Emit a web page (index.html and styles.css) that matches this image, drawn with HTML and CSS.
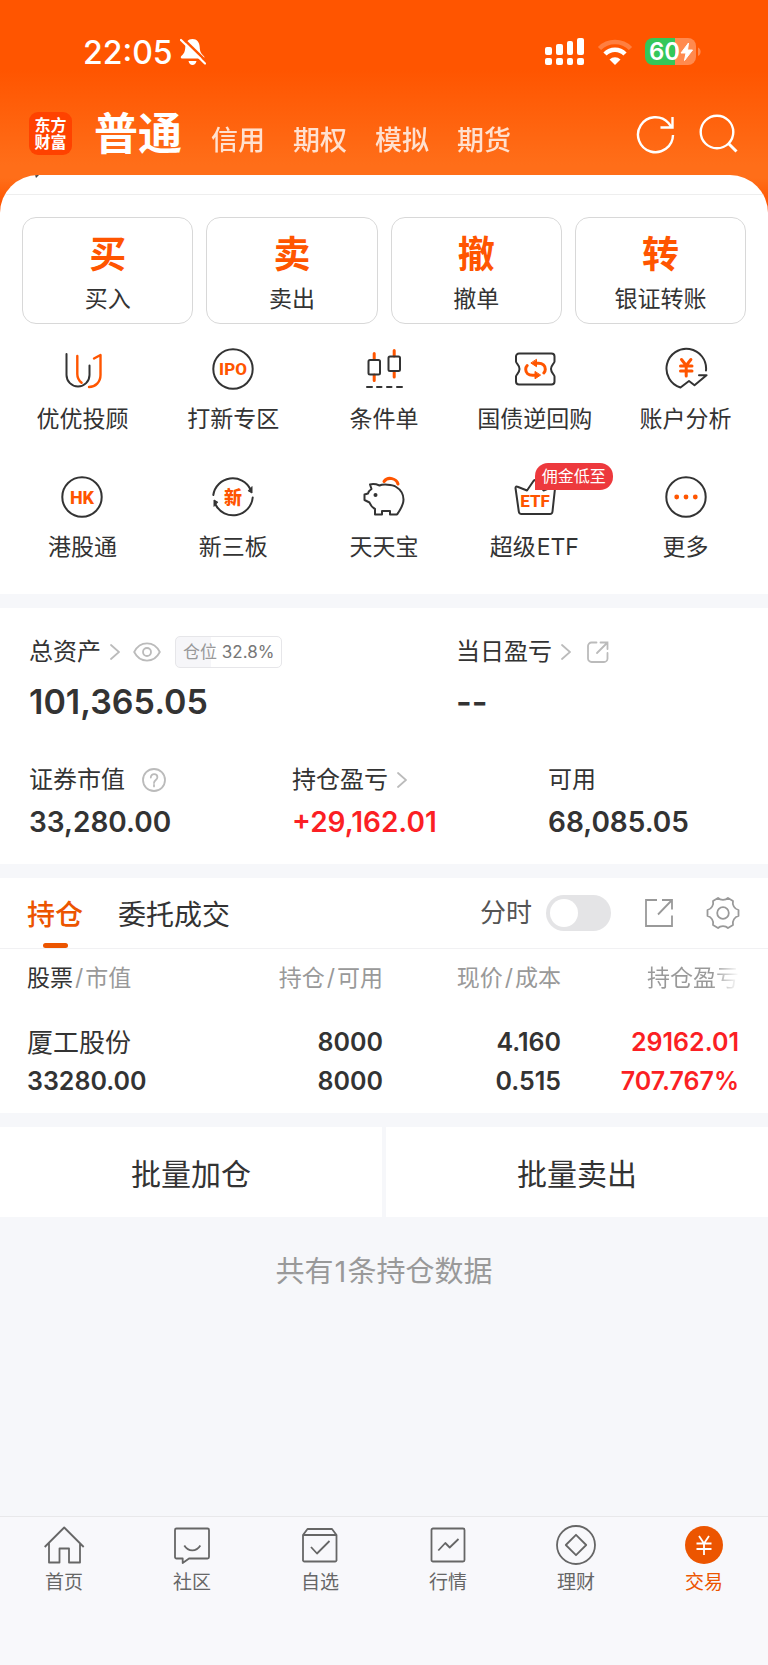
FILE: index.html
```html
<!DOCTYPE html>
<html lang="zh-CN">
<head>
<meta charset="utf-8">
<meta name="viewport" content="width=device-width, initial-scale=1">
<title>交易</title>
<link rel="stylesheet" href="styles.css">
</head>
<body>
<div class="app">
  <header class="top">
    <div class="status">
      <span class="time">22:05</span>
      <svg class="bell" width="26" height="28" viewBox="0 0 26 28"><path d="M12.500 1c-4.500 0-7 3.500-7.200 8-.2 5-1.600 7-4 9-.9 1-.6 2.500.7 2.500h21c1.500 0 1.800-1.500.8-2.500-2.500-2.300-3.900-4-4.100-9C19.500 4.500 17 1 12.500 1zM8.500 23c.6 2.500 2 4 4 4s3.400-1.500 4-4z" fill="#fff"/><path d="M3 .5 27 24" stroke="#ff5500" stroke-width="2.500"/><path d="M1 2 25 25.500" stroke="#fff" stroke-width="2.200" stroke-linecap="round"/></svg>
      <span class="spacer"></span>
      <svg width="40" height="28" viewBox="0 0 40 28" fill="#fff"><rect x="0" y="9" width="7" height="8" rx="2"/><rect x="11" y="6" width="7" height="11" rx="2"/><rect x="22" y="3" width="6" height="14" rx="2"/><rect x="32" y="0" width="7" height="17" rx="2"/><rect x="0" y="20" width="7" height="7" rx="2"/><rect x="11" y="20" width="7" height="7" rx="2"/><rect x="22" y="20" width="6" height="7" rx="2"/><rect x="32" y="20" width="7" height="7" rx="2"/></svg>
      <svg class="wifi" width="36" height="28" viewBox="0 0 36 28" fill="none" stroke="#fff"><path d="M2.500 10.500a22 22 0 0 1 31 0" stroke-width="4.500" opacity=".25"/><path d="M8 16a14 14 0 0 1 20 0" stroke-width="4.500"/><path d="M12.500 21.500a8 8 0 0 1 11 0L18 27z" fill="#fff" stroke="none"/></svg>
      <svg class="battery" width="56" height="28" viewBox="0 0 56 28"><path d="M8 0h22v27H8a8 8 0 0 1-8-8V8a8 8 0 0 1 8-8z" fill="#34c759"/><path d="M30 0h13a8 8 0 0 1 8 8v11a8 8 0 0 1-8 8H30z" fill="#ff8a4f"/><path d="M53 9.500c3.500 1.500 3.500 7 0 8.500z" fill="#ff8a4f"/><text x="4" y="22" class="battery-text">60</text><path d="M43.500 5 36 15h5l-1.500 7.500L47.500 12h-5z" fill="#fff" stroke="#fff" stroke-linejoin="round"/></svg>
    </div>
    <nav class="accounts">
      <div class="logo"><span>东方</span><span>财富</span></div>
      <a class="account current" href="#">普通</a>
      <div class="account-list"><a class="account" href="#">信用</a><a class="account" href="#">期权</a><a class="account" href="#">模拟</a><a class="account" href="#">期货</a></div>
      <span class="spacer"></span>
      <button class="icon-btn" aria-label="刷新"><svg width="40" height="40" viewBox="0 0 40 40" fill="none" stroke="#fff" stroke-width="2.400"><path d="M37 21A17.500 17.500 0 1 1 32.500 9l3 4M24.500 13.500h12V3"/></svg></button>
      <button class="icon-btn search" aria-label="搜索"><svg width="40" height="40" viewBox="0 0 40 40" fill="none" stroke="#fff" stroke-width="2.400"><circle cx="18" cy="18" r="16.300"/><path d="M29.500 29.500l8 8" stroke-width="3"/></svg></button>
    </nav>
  </header>

  <main>
    <section class="sheet">
      <div class="scroll-edge"><svg width="4" height="3" viewBox="0 0 4 3"><path d="M0 0h4L1 3z" fill="#444"/></svg></div>
      <div class="trades">
        <button class="trade"><b>买</b><span>买入</span></button>
        <button class="trade"><b>卖</b><span>卖出</span></button>
        <button class="trade"><b>撤</b><span>撤单</span></button>
        <button class="trade"><b>转</b><span>银证转账</span></button>
      </div>
      <div class="tools">
        <a class="tool" href="#"><svg class="ico" viewBox="0 0 44 44"><path d="M6.500 7v21a11.500 11.500 0 0 0 23 0v-9.500"/><path class="hot" d="M17.300 9v18c0 4 2 7 4.300 8.800M34 11.500 40.500 8v20c0 7-5 12-11.500 12"/></svg>优优投顾</a>
        <a class="tool" href="#"><svg class="ico" viewBox="0 0 44 44"><circle cx="22" cy="22" r="19.700"/><text x="22" y="28">IPO</text></svg>打新专区</a>
        <a class="tool" href="#"><svg class="ico" viewBox="0 0 44 44"><path class="hot thick" d="M12.200 6.500v6M12.200 28v5.500M32.200 3.500V9M32.200 25v5"/><rect x="6.500" y="13" width="11.500" height="14.500" rx="1.500"/><rect x="26.500" y="9.500" width="11.500" height="14.500" rx="1.500"/><path d="M5 40h5M15 40h4.500M25 40h4.500M35 40h5"/></svg>条件单</a>
        <a class="tool" href="#"><svg class="ico" viewBox="0 0 44 44"><path d="M6 6.500h32.500a3 3 0 0 1 3 3v5c0 2-3.500 3.500-3.500 7.500s3.500 5.500 3.500 7.500v5a3 3 0 0 1-3 3H6a3 3 0 0 1-3-3v-5c0-2 3.500-3.500 3.500-7.500S3 16.500 3 14.500v-5a3 3 0 0 1 3-3z"/><path class="hot thick" d="M23.500 16.200h2c4.200 0 6.800 2.500 6.800 6 0 1.500-.6 2.800-1.500 3.800M21.500 28.300h-2c-4.200 0-6.800-2.500-6.800-6 0-1.500.6-2.800 1.500-3.800"/><path d="M23.500 12.700v7l-5.300-3.500zM22 24.800v7l5.300-3.500z" fill="#ff5500" stroke="#ff5500" stroke-width="1"/></svg>国债逆回购</a>
        <a class="tool" href="#"><svg class="ico" viewBox="0 0 44 44"><path d="M42 23.500A19.800 19.800 0 1 0 16.500 40.500L25 34l5.500 4.300L42.500 28.200H35"/><path class="hot thick" d="M17.500 12.500l4.700 6 4.700-6M22.200 18.500V29M16.500 19h11.500M16.500 24h11.500"/></svg>账户分析</a>
        <a class="tool" href="#"><svg class="ico" viewBox="0 0 44 44"><circle cx="22" cy="22" r="19.700"/><text x="22" y="28.500" class="large">HK</text></svg>港股通</a>
        <a class="tool" href="#"><svg class="ico" viewBox="0 0 44 44"><path d="M2.300 20A19.700 19.700 0 0 1 39.500 14.500M41.700 22.500A19.700 19.700 0 0 1 4.500 29.500"/><path d="M41 12v6L37.500 16zM3 31v-6l3.500 2z" fill="#333" stroke-width="1"/><text x="22" y="28.500" class="large">新</text></svg>新三板</a>
        <a class="tool" href="#"><svg class="ico" viewBox="0 0 44 44"><path d="M8 9.500c3-.8 7 0 9.500 1 3-1.500 13-1 16 1 5 3 8 7.500 8 13 0 6-3 10-6.500 15H28V36h-8v3.500h-7V34c-3-1.500-4.500-4-5.500-6.500L2.500 25v-5.500l3.500-1c.5-2 2-3.500 3.500-4.500z"/><circle cx="13.500" cy="20" r="2" fill="#333" stroke="none"/><path class="hot thick" d="M22 6.500c4-5.500 12.500-3 14 2.500"/></svg>天天宝</a>
        <a class="tool" href="#"><svg class="ico" viewBox="0 0 44 44"><path d="M2.500 13c0-1.500 1-2 2-1.200L14 15.500 20.500 6c1-1.200 2.500-1.200 3.500 0L30.500 15.500l9.500-3.700c1.300-.6 2.300 0 2 1.500L39.500 36.500c-.2 2-1 2.500-2.500 2.500H8.500C7 39 6 38.500 5.800 36.500z"/><text x="22" y="32">ETF</text></svg><span>超级<span class="latin">ETF</span></span><span class="badge">佣金低至</span></a>
        <a class="tool" href="#"><svg class="ico" viewBox="0 0 44 44"><circle cx="22" cy="22" r="19.700"/><g fill="#ff5500" stroke="none"><circle cx="12.700" cy="22" r="2.400"/><circle cx="22" cy="22" r="2.400"/><circle cx="31.300" cy="22" r="2.400"/></g></svg>更多</a>
      </div>
    </section>

    <section class="assets">
      <div class="asset-row two">
        <div>
          <div class="label">总资产<svg class="chev" viewBox="0 0 10 16"><path d="M1 1l8 7-8 7"/></svg><svg class="eye" viewBox="0 0 28 20"><path d="M1.200 10C7-1.500 21-1.500 26.800 10 21 21.500 7 21.500 1.200 10z"/><circle cx="14" cy="10" r="4"/></svg><span class="ratio">仓位 <i>32.8%</i></span></div>
          <div class="total">101,365.05</div>
        </div>
        <div>
          <div class="label">当日盈亏<svg class="chev" viewBox="0 0 10 16"><path d="M1 1l8 7-8 7"/></svg><svg class="share" viewBox="0 0 22 22"><path d="M9.500 1.500h-5a3.500 3.500 0 0 0-3.500 3.500v12.500A3.500 3.500 0 0 0 4.500 21h12.500a3.500 3.500 0 0 0 3.500-3.500V12M13.500 1.500h7v6.500M20.500 1.500 10 12"/></svg></div>
          <div class="total">--</div>
        </div>
      </div>
      <div class="asset-row three">
        <div><div class="label">证券市值<svg class="help" viewBox="0 0 24 24"><circle cx="12" cy="12" r="11"/><path d="M8.800 9.500c0-4.500 6.600-4.200 6.600-.2 0 2.700-3.400 2.700-3.400 5.700M12 16.800v1.600"/></svg></div><div class="amount">33,280.00</div></div>
        <div><div class="label">持仓盈亏<svg class="chev" viewBox="0 0 10 16"><path d="M1 1l8 7-8 7"/></svg></div><div class="amount up">+29,162.01</div></div>
        <div><div class="label">可用</div><div class="amount">68,085.05</div></div>
      </div>
    </section>

    <section class="holdings">
      <div class="tabs">
        <button class="tab active">持仓</button>
        <button class="tab">委托成交</button>
        <span class="spacer"></span>
        <label class="switch-label" for="timeline">分时</label>
        <input class="switch" type="checkbox" id="timeline">
        <button class="icon-btn export" aria-label="导出"><svg width="30" height="30" viewBox="0 0 30 30" fill="none" stroke="#999" stroke-width="1.800"><path d="M13 2H2v26h26V17.500M18 2h10v9.500M28 2 14 16.500"/></svg></button>
        <button class="icon-btn gear" aria-label="设置"><svg width="34" height="34" viewBox="0 0 34 34" fill="none" stroke="#999" stroke-width="1.800" stroke-linejoin="round"><path d="M12 2c2.500 2.500 7.500 2.500 10 0l5 3c-1 4 1.500 8 5.500 9v6c-4 1-6.500 5-5.500 9l-5 3c-2.500-2.500-7.500-2.500-10 0l-5-3c1-4-1.500-8-5.500-9v-6C5.500 13 8 9 7 5z"/><circle cx="17" cy="17" r="5.800"/></svg></button>
      </div>
      <table class="stocks">
        <thead><tr><th><em>股票</em><s>/</s>市值</th><th>持仓<s>/</s>可用</th><th>现价<s>/</s>成本</th><th class="fade">持仓盈亏</th></tr></thead>
        <tbody>
          <tr class="first"><td class="name">厦工股份</td><td>8000</td><td>4.160</td><td class="up">29162.01</td></tr>
          <tr><td>33280.00</td><td>8000</td><td>0.515</td><td class="up">707.767%</td></tr>
        </tbody>
      </table>
    </section>

    <div class="batch"><button>批量加仓</button><button>批量卖出</button></div>
    <p class="count">共有<span class="latin">1</span>条持仓数据</p>
  </main>

  <nav class="bottom">
    <a href="#"><svg viewBox="0 0 44 44"><path d="M2.700 24 22.200 4.500 41.700 24M7 20v19.500h10.500v-14H27v14h11V20"/></svg>首页</a>
    <a href="#"><svg viewBox="0 0 44 44"><path d="M6.500 5.500h31a1.500 1.500 0 0 1 1.500 1.500v27a1.500 1.500 0 0 1-1.500 1.500H19L12.700 40v-4.500H6.500A1.500 1.500 0 0 1 5 34V7a1.500 1.500 0 0 1 1.500-1.500zM14.300 22.500c4 6.500 12 6.500 16 0"/></svg>社区</a>
    <a href="#"><svg viewBox="0 0 44 44"><path d="M9.500 6h24.500l4.500 6v25.500a1.500 1.500 0 0 1-1.500 1H6.500a1.500 1.500 0 0 1-1.500-1V12zM5 12h33.500M13 24l6 6.500L31.500 18"/></svg>自选</a>
    <a href="#"><svg viewBox="0 0 44 44"><rect x="5.500" y="5.500" width="33" height="33" rx="1.500"/><path d="M12.300 27.500l7-7.500 4.400 4.500L32.500 16"/></svg>行情</a>
    <a href="#"><svg viewBox="0 0 44 44"><circle cx="22" cy="22" r="19"/><path d="M22 11.800 32.200 22 22 32.200 11.800 22z"/></svg>理财</a>
    <a class="here" href="#"><svg viewBox="0 0 44 44"><circle cx="22" cy="22" r="19" fill="#ec5500" stroke="none"/><path d="M17 13l5 7.500 5-7.500M22 20.500V32M14.500 20.500h15M14.500 26h15" stroke="#fff"/></svg>交易</a>
  </nav>
</div>
</body>
</html>
```

FILE: styles.css
```css
* { box-sizing: border-box; }
body {
  margin: 0;
  background: #f6f7fa;
  color: #333;
  font-family: Inter, "Noto Sans CJK SC", sans-serif;
}
a { color: inherit; text-decoration: none; }
button { border: 0; padding: 0; margin: 0; background: none; color: inherit; font: inherit; }
svg { display: block; flex: none; }
em, i { font-style: normal; }
.spacer { flex: 1; }
.latin { margin: 0 1px; }
.app { min-height: 100vh; display: flex; flex-direction: column; }
main { flex: 1; }

.top {
  padding-bottom: 40px;
  background: linear-gradient(#ff5500 70px, #ff6e19 165px, #ff6e19 178px, #ff5500 205px);
  color: #fff;
}
.status { display: flex; align-items: center; height: 104px; padding: 0 67px 0 83px; }
.time { padding-top: 2px; font-size: 32px; line-height: 40px; font-weight: 500; }
.bell { margin-left: 7px; }
.wifi { margin-left: 12px; }
.battery { margin-left: 12px; }
.battery-text { font-size: 24px; font-weight: 600; fill: #fff; }

.accounts { display: flex; align-items: center; height: 71px; padding: 0 29px; }
.logo {
  display: flex; flex-direction: column; align-items: center; justify-content: center;
  width: 43px; height: 43px; margin-bottom: 12px; border-radius: 9px; background: #ff4200;
  font-size: 16px; line-height: 17px; font-weight: 700;
}
.account-list { display: flex; gap: 28px; margin: 3px 0 0 29px; }
.account { font-size: 27px; line-height: 40px; font-weight: 500; opacity: .8; }
.account.current { margin: 0 0 12px 22px; font-size: 44px; line-height: 52px; font-weight: 700; opacity: 1; }
.icon-btn { display: block; }
.accounts .icon-btn { margin-bottom: 12px; }
.accounts .search { margin-left: 23px; }

.sheet {
  position: relative;
  margin-top: -40px;
  padding-bottom: 26px;
  border-radius: 38px 38px 0 0;
  background: #fff;
  overflow: hidden;
}
.scroll-edge { height: 20px; padding-left: 35px; border-bottom: 1px solid #eee; }
.trades { display: grid; grid-template-columns: repeat(4, 1fr); gap: 13px; padding: 22px 22px 0; }
.trade {
  display: flex; flex-direction: column; align-items: center;
  height: 107px; padding-top: 16px;
  border: 1px solid #d8d8d8; border-radius: 14px;
}
.trade b { color: #ff5500; font-size: 37px; line-height: 42px; font-weight: 700; }
.trade span { margin-top: 8px; font-size: 23px; line-height: 30px; }
.tools { display: grid; grid-template-columns: repeat(5, 1fr); row-gap: 35px; padding: 23px 7px 0; }
.tool {
  position: relative;
  display: flex; flex-direction: column; align-items: center; gap: 7px;
  font-size: 23px; line-height: 42px; white-space: nowrap;
}
.ico { width: 44px; height: 44px; fill: none; stroke: #333; stroke-width: 2; stroke-linecap: round; stroke-linejoin: round; }
.ico .hot { stroke: #ff5500; stroke-width: 2.400; }
.ico .thick { stroke-width: 3; }
.ico text { fill: #ff5500; stroke: none; font-family: Roboto, "Noto Sans CJK SC", sans-serif; font-size: 17px; font-weight: 800; text-anchor: middle; }
.ico .large { font-size: 18px; }
.badge {
  position: absolute; top: -12px; left: 50%;
  height: 27px; padding: 0 7px;
  border-radius: 13px 13px 13px 0;
  background: #ed393d; color: #fff;
  font-size: 16px; line-height: 27px;
}

.assets { margin-top: 14px; padding: 23px 29px 0; background: #fff; }
.asset-row { display: grid; }
.two { grid-template-columns: 427fr 283fr; }
.three { grid-template-columns: 263fr 256fr 191fr; padding: 28px 0 23px; }
.label { display: flex; align-items: center; height: 42px; font-size: 24px; line-height: 40px; }
.label svg { fill: none; stroke: #bbb; stroke-width: 1.800; stroke-linecap: round; }
.chev { width: 10px; height: 16px; margin-left: 9px; }
.eye { width: 28px; height: 20px; margin-left: 13px; }
.share { width: 22px; height: 22px; margin-left: 16px; }
.help { width: 24px; height: 24px; margin-left: 17px; }
.ratio {
  margin-left: 14px; padding: 0 7px; height: 32px;
  border: 1px solid #e6e6e9; border-radius: 5px;
  background: linear-gradient(90deg, #f6f6f9 33%, #fff 33%);
  color: #999; font-size: 17px; line-height: 30px; white-space: nowrap;
}
.ratio i { color: #777; }
.total { font-size: 34px; line-height: 58px; font-weight: 600; }
.amount { margin-top: 2px; font-size: 28px; line-height: 38px; font-weight: 600; }
.up { color: #fb1f24; }

.holdings { margin-top: 14px; background: #fff; }
.tabs { display: flex; align-items: center; height: 71px; padding: 0 28px 0 27px; border-bottom: 1px solid #f1f1f3; }
.tab { position: relative; height: 70px; font-size: 28px; line-height: 74px; }
.tab + .tab { margin-left: 35px; }
.tab.active { color: #ec5500; font-weight: 500; }
.tab.active::after {
  content: ""; position: absolute; left: 50%; bottom: 0;
  width: 25px; height: 5px; margin-left: -12px; border-radius: 3px; background: #ec5500;
}
.switch-label { font-size: 26px; line-height: 36px; color: #555; }
.switch {
  appearance: none; width: 65px; height: 36px; margin: 0 0 0 14px; padding: 4px;
  border-radius: 18px; background: #e4e4e6;
}
.switch::before { content: ""; display: block; width: 28px; height: 28px; border-radius: 50%; background: #fff; }
.export { margin-left: 33px; }
.gear { margin-left: 32px; }
.stocks { width: 100%; table-layout: fixed; border-collapse: separate; border-spacing: 0; padding: 6px 29px 12px 27px; }
.stocks th { padding: 0; height: 42px; font-size: 23px; font-weight: 400; color: #999; text-align: right; white-space: nowrap; }
.stocks th:first-child, .stocks td:first-child { text-align: left; }
.stocks em { color: #333; }
.stocks s { padding: 0 2px; text-decoration: none; }
.stocks td { padding: 0; height: 39px; font-size: 25px; line-height: 39px; font-weight: 600; text-align: right; }
.stocks .first td { height: 65px; padding-top: 26px; }
.stocks .name { font-size: 26px; font-weight: 400; }
.stocks .fade { background: linear-gradient(90deg, #999 85%, #fff 100%); background-clip: text; color: transparent; }

.batch { display: grid; grid-template-columns: 1fr 1fr; gap: 4px; margin-top: 14px; }
.batch button { height: 90px; background: #fff; font-size: 30px; }
.count { margin: 33px 0; text-align: center; color: #999; font-size: 29px; line-height: 44px; }

.bottom {
  display: grid; grid-template-columns: repeat(6, 1fr);
  padding: 6px 0 67px; border-top: 1px solid #e8e8ea; background: #f8f8fb;
}
.bottom a { display: flex; flex-direction: column; align-items: center; color: #666; font-size: 19px; line-height: 31px; }
.bottom svg { width: 44px; height: 44px; fill: none; stroke: #666; stroke-width: 1.800; stroke-linejoin: round; }
.bottom .here { color: #ec5500; }
```
